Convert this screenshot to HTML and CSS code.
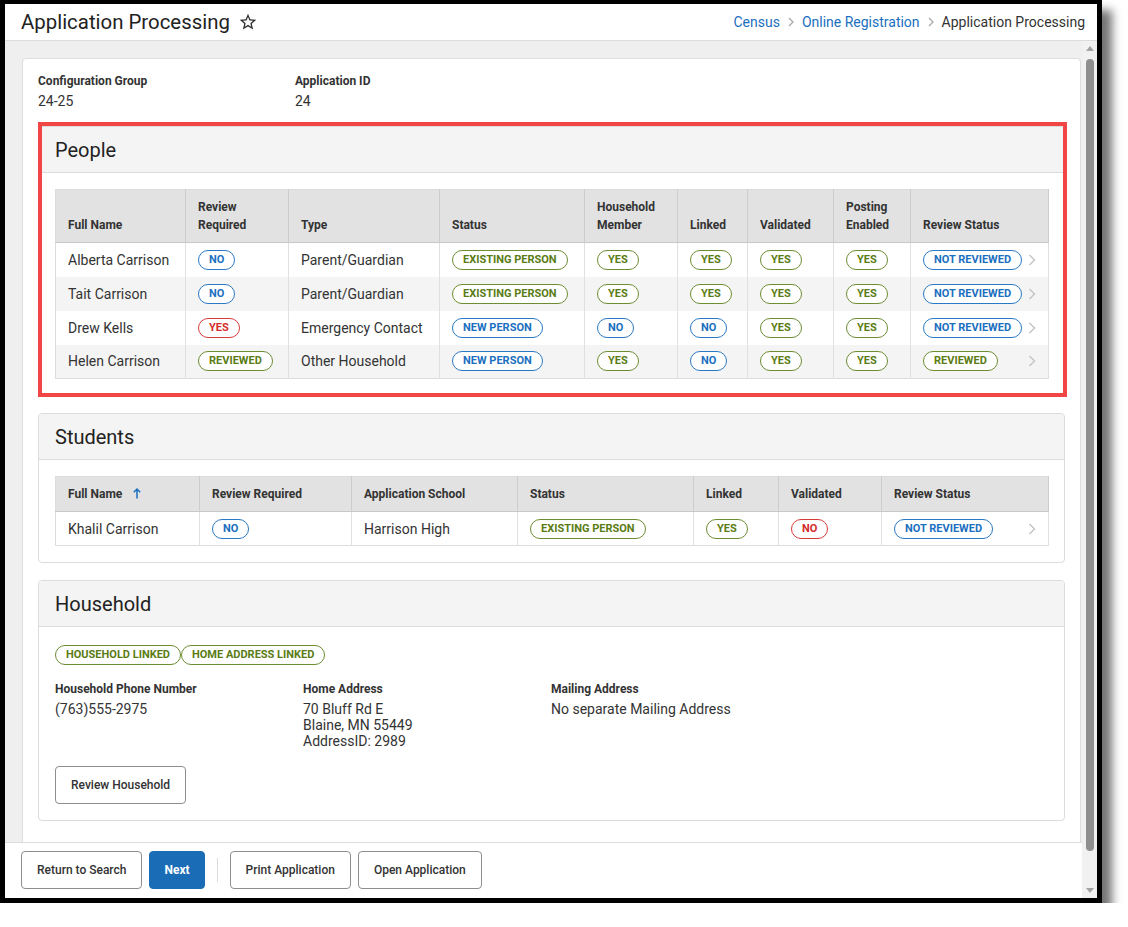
FILE: index.html
```html
<!DOCTYPE html>
<html lang="en">
<head>
<meta charset="utf-8">
<title>Application Processing</title>
<link rel="stylesheet" href="styles.css">
</head>
<body>
<div class="frame">
  <header class="topbar">
    <div class="title">Application Processing
      <svg class="star" width="20" height="20" viewBox="0 0 24 24"><path fill="#333" d="M22 9.24l-7.19-.62L12 2 9.19 8.63 2 9.24l5.46 4.73L5.82 21 12 17.27 18.18 21l-1.63-7.03L22 9.24zM12 15.4l-3.76 2.27 1-4.28-3.32-2.88 4.38-.38L12 6.1l1.71 4.04 4.38.38-3.32 2.88 1 4.28L12 15.4z"/></svg>
    </div>
    <nav class="crumbs">
      <a class="crumb-link">Census</a>
      <svg class="crumb-sep" width="6" height="10" viewBox="0 0 6 10"><path d="M1 1l4 4-4 4" fill="none" stroke="#a8a8a8" stroke-width="1.3"/></svg>
      <a class="crumb-link">Online Registration</a>
      <svg class="crumb-sep" width="6" height="10" viewBox="0 0 6 10"><path d="M1 1l4 4-4 4" fill="none" stroke="#a8a8a8" stroke-width="1.3"/></svg>
      <span class="crumb-current">Application Processing</span>
    </nav>
  </header>
  <div class="body">
    <div class="main">
      <div class="scroll">
        <div class="card">
          <div class="info">
            <div class="info-col">
              <div class="label">Configuration Group</div>
              <div class="value">24-25</div>
            </div>
            <div class="info-col">
              <div class="label">Application ID</div>
              <div class="value">24</div>
            </div>
          </div>

          <section class="panel">
            <div class="highlight"></div>
            <div class="panel-head">People</div>
            <div class="panel-body">
              <table class="grid">
                <colgroup>
                  <col style="width:130px"><col style="width:103px"><col style="width:151px"><col style="width:145px"><col style="width:93px"><col style="width:70px"><col style="width:86px"><col style="width:77px"><col style="width:138px">
                </colgroup>
                <thead>
                  <tr class="tall">
                    <th>Full Name</th><th>Review<br>Required</th><th>Type</th><th>Status</th><th>Household<br>Member</th><th>Linked</th><th>Validated</th><th>Posting<br>Enabled</th><th>Review Status</th>
                  </tr>
                </thead>
                <tbody>
                  <tr>
                    <td>Alberta Carrison</td>
                    <td><span class="badge blue">NO</span></td>
                    <td>Parent/Guardian</td>
                    <td><span class="badge green">EXISTING PERSON</span></td>
                    <td><span class="badge green">YES</span></td>
                    <td><span class="badge green">YES</span></td>
                    <td><span class="badge green">YES</span></td>
                    <td><span class="badge green">YES</span></td>
                    <td><div class="last"><span class="badge blue">NOT REVIEWED</span><svg class="chev" width="8" height="12" viewBox="0 0 8 12"><path d="M1.5 1l5 5-5 5" fill="none" stroke="#c6c6c6" stroke-width="1.5"/></svg></div></td>
                  </tr>
                  <tr>
                    <td>Tait Carrison</td>
                    <td><span class="badge blue">NO</span></td>
                    <td>Parent/Guardian</td>
                    <td><span class="badge green">EXISTING PERSON</span></td>
                    <td><span class="badge green">YES</span></td>
                    <td><span class="badge green">YES</span></td>
                    <td><span class="badge green">YES</span></td>
                    <td><span class="badge green">YES</span></td>
                    <td><div class="last"><span class="badge blue">NOT REVIEWED</span><svg class="chev" width="8" height="12" viewBox="0 0 8 12"><path d="M1.5 1l5 5-5 5" fill="none" stroke="#c6c6c6" stroke-width="1.5"/></svg></div></td>
                  </tr>
                  <tr>
                    <td>Drew Kells</td>
                    <td><span class="badge red">YES</span></td>
                    <td>Emergency Contact</td>
                    <td><span class="badge blue">NEW PERSON</span></td>
                    <td><span class="badge blue">NO</span></td>
                    <td><span class="badge blue">NO</span></td>
                    <td><span class="badge green">YES</span></td>
                    <td><span class="badge green">YES</span></td>
                    <td><div class="last"><span class="badge blue">NOT REVIEWED</span><svg class="chev" width="8" height="12" viewBox="0 0 8 12"><path d="M1.5 1l5 5-5 5" fill="none" stroke="#c6c6c6" stroke-width="1.5"/></svg></div></td>
                  </tr>
                  <tr>
                    <td>Helen Carrison</td>
                    <td><span class="badge green">REVIEWED</span></td>
                    <td>Other Household</td>
                    <td><span class="badge blue">NEW PERSON</span></td>
                    <td><span class="badge green">YES</span></td>
                    <td><span class="badge blue">NO</span></td>
                    <td><span class="badge green">YES</span></td>
                    <td><span class="badge green">YES</span></td>
                    <td><div class="last"><span class="badge green">REVIEWED</span><svg class="chev" width="8" height="12" viewBox="0 0 8 12"><path d="M1.5 1l5 5-5 5" fill="none" stroke="#c6c6c6" stroke-width="1.5"/></svg></div></td>
                  </tr>
                </tbody>
              </table>
            </div>
          </section>

          <section class="panel">
            <div class="panel-head">Students</div>
            <div class="panel-body">
              <table class="grid">
                <colgroup>
                  <col style="width:144px"><col style="width:152px"><col style="width:166px"><col style="width:176px"><col style="width:85px"><col style="width:103px"><col style="width:167px">
                </colgroup>
                <thead>
                  <tr>
                    <th>Full Name <svg class="sort" width="10" height="12" viewBox="0 0 10 12"><path d="M5 11.5V2M1.8 5.2L5 2l3.2 3.2" fill="none" stroke="#1b6fc0" stroke-width="1.5"/></svg></th><th>Review Required</th><th>Application School</th><th>Status</th><th>Linked</th><th>Validated</th><th>Review Status</th>
                  </tr>
                </thead>
                <tbody>
                  <tr>
                    <td>Khalil Carrison</td>
                    <td><span class="badge blue">NO</span></td>
                    <td>Harrison High</td>
                    <td><span class="badge green">EXISTING PERSON</span></td>
                    <td><span class="badge green">YES</span></td>
                    <td><span class="badge red">NO</span></td>
                    <td><div class="last"><span class="badge blue">NOT REVIEWED</span><svg class="chev" width="8" height="12" viewBox="0 0 8 12"><path d="M1.5 1l5 5-5 5" fill="none" stroke="#c6c6c6" stroke-width="1.5"/></svg></div></td>
                  </tr>
                </tbody>
              </table>
            </div>
          </section>

          <section class="panel">
            <div class="panel-head">Household</div>
            <div class="panel-body hh-body">
              <div class="badges">
                <span class="badge green">HOUSEHOLD LINKED</span><span class="badge green">HOME ADDRESS LINKED</span>
              </div>
              <div class="hh-grid">
                <div class="hh-col">
                  <div class="label">Household Phone Number</div>
                  <div class="hh-value">(763)555-2975</div>
                </div>
                <div class="hh-col">
                  <div class="label">Home Address</div>
                  <div class="hh-value">70 Bluff Rd E<br>Blaine, MN 55449<br>AddressID: 2989</div>
                </div>
                <div class="hh-col">
                  <div class="label">Mailing Address</div>
                  <div class="hh-value">No separate Mailing Address</div>
                </div>
              </div>
              <button class="btn">Review Household</button>
            </div>
          </section>
        </div>
      </div>
      <footer class="footer">
        <button class="btn">Return to Search</button>
        <button class="btn primary">Next</button>
        <span class="sep"></span>
        <button class="btn">Print Application</button>
        <button class="btn">Open Application</button>
      </footer>
    </div>
    <div class="scrollbar">
      <div class="arrow up"></div>
      <div class="thumb"></div>
      <div class="spacer"></div>
      <div class="arrow down"></div>
    </div>
  </div>
</div>
</body>
</html>
```

FILE: styles.css
```css
* { box-sizing: border-box; }

body {
  margin: 0;
  background: #fff;
  font-family: Roboto, "Noto Sans", "Liberation Sans", sans-serif;
  color: #333;
}

.frame {
  width: 1102px;
  height: 903px;
  border: 5px solid #000;
  border-top-width: 4px;
  box-shadow: 10px 10px 9px rgba(0, 0, 0, 0.55);
  background: #fff;
  display: flex;
  flex-direction: column;
  overflow: hidden;
}

.topbar {
  flex: none;
  height: 37px;
  border-bottom: 1px solid #dcdcdc;
  display: flex;
  align-items: center;
  justify-content: space-between;
  padding: 0 12px 1px 16px;
}

.title {
  font-size: 20.4px;
  color: #222;
  display: flex;
  align-items: center;
  gap: 8px;
}

.star { display: block; }

.crumbs {
  font-size: 14px;
  display: flex;
  align-items: center;
  gap: 7px;
}

.crumb-link { color: #1b6fc0; }
.crumb-current { color: #333; }
.crumb-sep { display: block; margin: 0 1px; }

.body {
  flex: 1;
  display: flex;
  min-height: 0;
}

.main {
  flex: 1;
  min-width: 0;
  display: flex;
  flex-direction: column;
}

.scroll {
  flex: 1;
  min-height: 0;
  overflow: hidden;
  background: #efefef;
  padding: 17px 1px 0 17px;
}

.card {
  background: #fff;
  border: 1px solid #dedede;
  border-radius: 4px;
  padding: 14px 15px 16px;
}

.info {
  display: flex;
  margin-bottom: 15px;
}

.info-col:first-child { width: 257px; }

.label {
  font-size: 12px;
  font-weight: 700;
  line-height: 16px;
  color: #333;
}

.value {
  font-size: 14px;
  line-height: 20px;
  margin-top: 2px;
}

.panel {
  position: relative;
  background: #fff;
  border: 1px solid #dcdcdc;
  border-radius: 4px;
  margin-bottom: 17px;
}

.highlight {
  position: absolute;
  top: -5px;
  left: -1px;
  right: -3px;
  bottom: -2px;
  border: 4px solid #f24545;
  pointer-events: none;
  z-index: 2;
}

.panel-head {
  height: 46px;
  background: #f4f4f4;
  border-bottom: 1px solid #dcdcdc;
  border-radius: 4px 4px 0 0;
  padding: 0 16px;
  display: flex;
  align-items: center;
  font-size: 20px;
  color: #222;
}

.panel-body { padding: 16px; }

.grid {
  width: 993px;
  table-layout: fixed;
  border-collapse: collapse;
  border: 1px solid #dcdcdc;
  font-size: 14px;
}

.grid th {
  background: #e2e2e2;
  font-size: 12px;
  font-weight: 700;
  line-height: 18px;
  text-align: left;
  vertical-align: bottom;
  padding: 8px 12px 8px 12px;
  border-right: 1px solid #cdcdcd;
  border-bottom: 1px solid #c8c8c8;
  color: #333;
}

.grid tr.tall th { height: 52px; }

.grid td {
  height: 34px;
  padding: 0 12px;
  vertical-align: middle;
  border-right: 1px solid #e0e0e0;
  color: #333;
  white-space: nowrap;
}

.grid tbody tr:nth-child(even) td { background: #f4f4f4; }

.sort { vertical-align: -1px; margin-left: 7px; }

.last {
  display: flex;
  align-items: center;
  justify-content: space-between;
}

.chev { display: block; flex: none; }

.badge {
  display: inline-flex;
  align-items: center;
  height: 20px;
  padding: 0 10px;
  border: 1px solid;
  border-radius: 10px;
  font-size: 11px;
  font-weight: 700;
  line-height: 18px;
  white-space: nowrap;
  background: #fff;
  vertical-align: middle;
}

.badge.green { color: #5a7c14; border-color: #6d8d33; }
.badge.blue { color: #1b6fc0; border-color: #2a79c4; }
.badge.red { color: #d52a2a; border-color: #d83a3a; }

.hh-body { padding-top: 18px; }

.badges { display: flex; }

.hh-grid {
  display: flex;
  margin-top: 16px;
}

.hh-col { width: 248px; }

.hh-value {
  font-size: 14px;
  line-height: 16px;
  margin-top: 4px;
}

.btn {
  height: 38px;
  padding: 0 15px;
  border: 1px solid #8e8e8e;
  border-radius: 4px;
  background: #fff;
  font-family: Roboto, "Noto Sans", sans-serif;
  font-size: 12px;
  font-weight: 500;
  color: #333;
}

.panel-body .btn { margin-top: 17px; }

.btn.primary {
  background: #1b6cb6;
  border-color: #1b6cb6;
  color: #fff;
  font-weight: 700;
  padding: 0 14px;
}

.footer {
  flex: none;
  height: 56px;
  border-top: 1px solid #dcdcdc;
  background: #fff;
  display: flex;
  align-items: center;
  gap: 7px;
  padding: 0 16px 2px;
}

.sep {
  width: 1px;
  height: 24px;
  background: #dcdcdc;
  margin: 0 5px;
}

.scrollbar {
  flex: none;
  width: 15px;
  background: #f1f1f1;
  display: flex;
  flex-direction: column;
  align-items: center;
}

.arrow {
  flex: none;
  width: 15px;
  height: 15px;
  display: flex;
  align-items: center;
  justify-content: center;
}

.arrow.up::before,
.arrow.down::before {
  content: "";
  width: 0;
  height: 0;
  border-left: 4px solid transparent;
  border-right: 4px solid transparent;
}

.arrow.up::before { border-bottom: 5px solid #a3a3a3; }
.arrow.down::before { border-top: 5px solid #a3a3a3; }

.thumb {
  flex: none;
  width: 8px;
  height: 792px;
  margin-top: 3px;
  background: #8f8f8f;
  border-radius: 4px;
}

.spacer { flex: 1; }
```
